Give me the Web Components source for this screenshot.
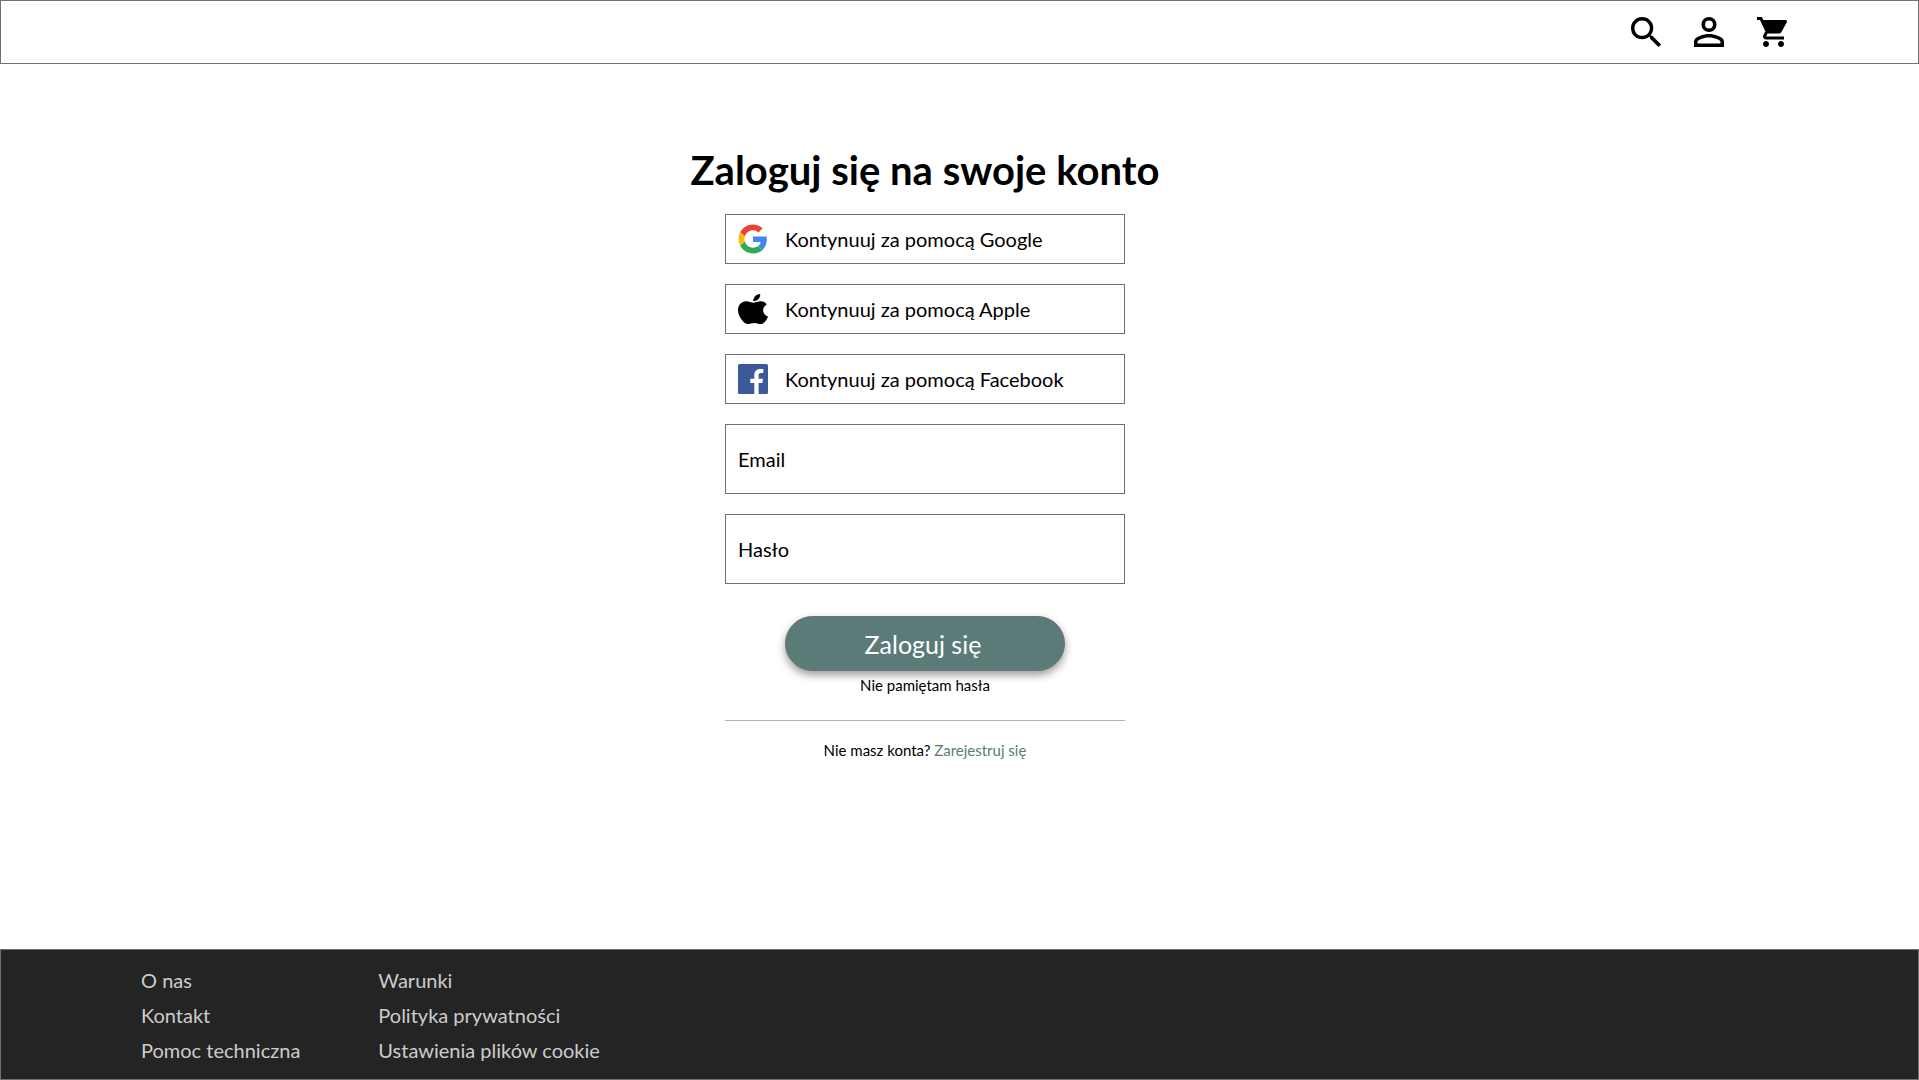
<!DOCTYPE html>
<html lang="pl">
<head>
<meta charset="utf-8">
<title>Zaloguj się</title>
<style>
  body { margin: 0; font-family: Lato, "Liberation Sans", sans-serif; color: #000; background: #fff; }
</style>
</head>
<body>
<login-page></login-page>
<script>
const define = (name, html, setup) => {
  const template = document.createElement('template');
  template.innerHTML = '<style>*{box-sizing:border-box}</style>' + html;
  customElements.define(name, class extends HTMLElement {
    constructor() {
      super();
      this.attachShadow({ mode: 'open' }).append(template.content.cloneNode(true));
    }
    connectedCallback() { if (setup) setup(this, this.shadowRoot); }
  });
};

define('site-header', `
<style>
  :host { display: block; }
  header { display: flex; justify-content: flex-end; align-items: center; height: 64px; padding: 0 131px; border: 1px solid #707070; }
  nav { display: flex; gap: 33px; }
  button { display: block; width: 30px; height: 30px; padding: 0; border: 0; background: none; cursor: pointer; }
  svg { display: block; width: 30px; height: 30px; }
</style>
<header><nav aria-label="Menu">
  <button aria-label="Szukaj"><svg viewBox="3 3 17.49 17.49"><path d="M15.5 14h-.79l-.28-.27A6.47 6.47 0 0 0 16 9.5 6.5 6.5 0 1 0 9.500 16c1.610 0 3.090-.590 4.230-1.570l.270.280v.790l5 4.990L20.490 19l-4.990-5zm-6 0C7.010 14 5 11.990 5 9.500S7.010 5 9.500 5 14 7.010 14 9.500 11.990 14 9.500 14z"/></svg></button>
  <button aria-label="Konto"><svg viewBox="4 4 16 16"><path d="M12 5.900a2.100 2.100 0 1 1 0 4.200 2.100 2.100 0 0 1 0-4.200m0 9c2.970 0 6.100 1.460 6.100 2.100v1.100H5.900V17c0-.640 3.130-2.100 6.100-2.100M12 4C9.790 4 8 5.790 8 8s1.790 4 4 4 4-1.790 4-4-1.790-4-4-4zm0 9c-2.670 0-8 1.340-8 4v3h16v-3c0-2.660-5.330-4-8-4z"/></svg></button>
  <button aria-label="Koszyk"><svg viewBox="1 2 20 20"><path d="M7 18c-1.100 0-1.990.9-1.990 2S5.900 22 7 22s2-.9 2-2-.9-2-2-2zM1 2v2h2l3.600 7.590-1.350 2.450c-.16.28-.25.61-.25.96 0 1.100.9 2 2 2h12v-2H7.420c-.14 0-.25-.11-.25-.25l.03-.12.9-1.630h7.450c.75 0 1.410-.41 1.750-1.030l3.580-6.490A1.003 1.003 0 0 0 20 4H5.210l-.94-2H1zm16 16c-1.100 0-1.990.9-1.990 2s.89 2 1.990 2 2-.9 2-2-.9-2-2-2z"/></svg></button>
</nav></header>`);

define('social-button', `
<style>
  :host { display: block; }
  button { display: flex; align-items: center; gap: 17px; width: 100%; height: 50px; padding: 0 12px; border: 1px solid #707070; background: #fff; color: #000; font: 400 20px/24px Lato, sans-serif; text-align: left; cursor: pointer; }
  ::slotted(svg) { display: block; flex: none; width: 30px; height: 30px; }
</style>
<button type="button"><slot name="icon"></slot><span><slot></slot></span></button>`);

define('form-field', `
<style>
  :host { display: block; }
  div { display: flex; align-items: center; gap: 12px; height: 70px; padding: 0 12px; border: 1px solid #707070; background: #fff; }
  label { font: 400 20px/24px Lato, sans-serif; }
  input { flex: 1; min-width: 0; height: 48px; padding: 0; border: 0; outline: 0; background: none; font: 400 20px/24px Lato, sans-serif; }
</style>
<div><label for="control"><slot></slot></label><input id="control"></div>`,
(host, root) => { root.querySelector('input').type = host.getAttribute('type') || 'text'; });

define('primary-button', `
<style>
  :host { display: block; }
  button { display: block; width: 100%; height: 55px; padding: 0 4px 0 0; border: 1px solid #707070; border-radius: 28px; background: #5b7b79; color: #fff; font: 400 25px/30px Lato, sans-serif; box-shadow: 0 4px 8px rgba(0,0,0,.4); cursor: pointer; }
</style>
<button type="submit"><slot></slot></button>`);

define('login-form', `
<style>
  :host { display: block; }
  form { display: flex; flex-direction: column; align-items: center; }
  h1 { margin: 0 0 20px; font: 700 40px/48px Lato, sans-serif; white-space: nowrap; }
  .stack { display: flex; flex-direction: column; gap: 20px; width: 400px; }
  primary-button { width: 280px; margin-top: 32px; }
  a { color: #000; text-decoration: none; }
  .small { margin: 5px 0 0; font: 400 15px/18px Lato, sans-serif; }
  hr { width: 400px; margin: 26px 0 15px; border: 0; border-top: 1px solid #b2b2b2; }
  a.accent { color: #5b7b79; }
</style>
<form>
  <h1>Zaloguj się na swoje konto</h1>
  <div class="stack">
    <social-button><svg slot="icon" viewBox="-1 -1 50 50"><path fill="#EA4335" d="M24 9.500c3.540 0 6.710 1.220 9.210 3.600l6.850-6.850C35.900 2.380 30.470 0 24 0 14.620 0 6.510 5.380 2.560 13.220l7.980 6.190C12.430 13.720 17.740 9.500 24 9.500z"/><path fill="#4285F4" d="M46.980 24.550c0-1.570-.15-3.090-.38-4.550H24v9.020h12.940c-.58 2.960-2.260 5.480-4.780 7.180l7.730 6c4.510-4.180 7.090-10.360 7.090-17.650z"/><path fill="#FBBC05" d="M10.530 28.590a14.500 14.500 0 0 1 0-9.180l-7.980-6.190a24 24 0 0 0 0 21.560l7.980-6.190z"/><path fill="#34A853" d="M24 48c6.480 0 11.930-2.130 15.890-5.810l-7.730-6c-2.150 1.450-4.920 2.300-8.160 2.300-6.260 0-11.570-4.220-13.470-9.910l-7.980 6.190C6.510 42.620 14.620 48 24 48z"/></svg>Kontynuuj za pomocą Google</social-button>
    <social-button><svg slot="icon" viewBox="0 0 30 30"><path d="M22.200.1c.2 2-.6 3.700-1.800 5-1.300 1.400-3.200 2.200-5.100 2.100-.2-1.900.6-3.600 1.800-4.900C18.400 1 20.500.1 22.200.1z"/><path d="M28.700 10.500c-2.400 1.500-3.600 3.500-3.600 5.800 0 2.800 1.700 5.100 4.900 6.300-.8 2.300-2.100 4.400-3.800 6-1 .9-2.200 1.400-3.700 1.400-2.300 0-3.600-1.100-6.300-1.100-2.800 0-4.100 1.100-6.300 1.100-1.600 0-2.900-.6-4-1.700C2.500 24.900 0 20.600 0 16.300c0-5.500 3.500-9 8.400-9 2.900 0 4.700 1.500 6.900 1.500 2 0 4.200-1.600 7.500-1.600 2.400 0 4.600 1.200 5.900 3.300z"/></svg>Kontynuuj za pomocą Apple</social-button>
    <social-button><svg slot="icon" viewBox="0 0 30 30"><rect width="30" height="30" rx="1.500" fill="#3c5a99"/><path fill="#fff" d="M16.300 30V19h-4v-4.300h4v-3.600c0-4 2.400-6.200 6-6.200 1.700 0 2.700.1 3 .2v4h-2.400c-1.900 0-2.300.9-2.300 2.300v3.300h4.400l-.6 4.300h-3.800v11z"/></svg>Kontynuuj za pomocą Facebook</social-button>
    <form-field type="email">Email</form-field>
    <form-field type="password">Hasło</form-field>
  </div>
  <primary-button>Zaloguj się</primary-button>
  <p class="small"><a href="#">Nie pamiętam hasła</a></p>
  <hr>
  <p class="small">Nie masz konta? <a class="accent" href="#">Zarejestruj się</a></p>
</form>`);

define('site-footer', `
<style>
  :host { display: block; }
  footer { display: flex; gap: 78px; padding: 13px 140px 11px; border: 1px solid #707070; background: #242424; }
  ul { margin: 0; padding: 0; list-style: none; }
  li { line-height: 35px; font-size: 20px; white-space: nowrap; }
  a { color: #ccc; text-decoration: none; }
</style>
<footer>
  <ul><li><a href="#">O nas</a></li><li><a href="#">Kontakt</a></li><li><a href="#">Pomoc techniczna</a></li></ul>
  <ul><li><a href="#">Warunki</a></li><li><a href="#">Polityka prywatności</a></li><li><a href="#">Ustawienia plików cookie</a></li></ul>
</footer>`);

define('login-page', `
<style>
  :host { display: flex; flex-direction: column; min-height: 100vh; }
  main { flex: 1; padding: 82px 69px 32px 0; }
</style>
<site-header></site-header>
<main><login-form></login-form></main>
<site-footer></site-footer>`);
</script>
</body>
</html>
